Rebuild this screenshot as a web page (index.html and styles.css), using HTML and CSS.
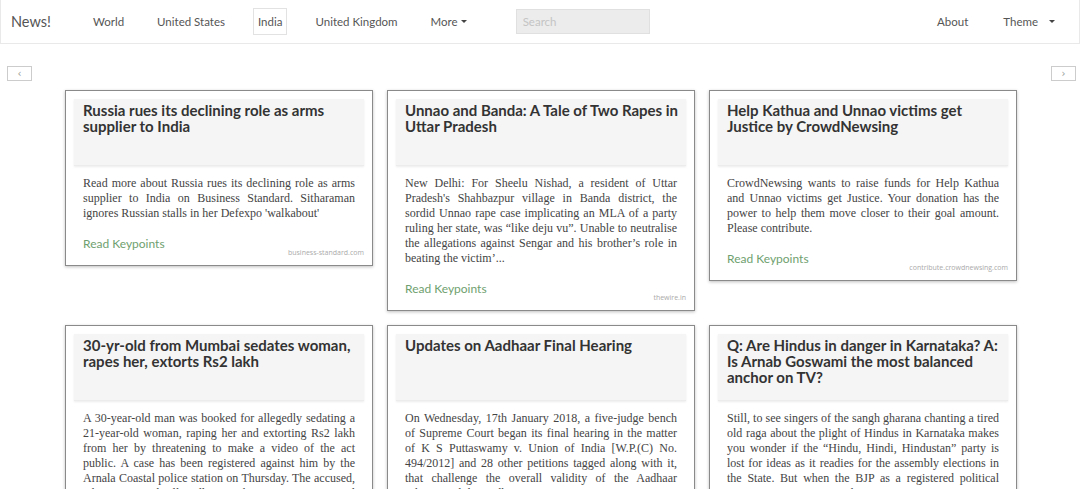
FILE: index.html
```html
<!DOCTYPE html>
<html lang="en">
<head>
<meta charset="utf-8">
<title>News!</title>
<link rel="stylesheet" href="styles.css">
</head>
<body>
<nav class="navbar">
  <a class="brand" href="#">News!</a>
  <ul class="nav-left">
    <li><a class="nav-link" href="#">World</a></li>
    <li><a class="nav-link" href="#">United States</a></li>
    <li><a class="nav-link active" href="#">India</a></li>
    <li><a class="nav-link" href="#">United Kingdom</a></li>
    <li><a class="nav-link dropdown" href="#">More<span class="caret"></span></a></li>
  </ul>
  <input class="search" type="text" placeholder="Search">
  <ul class="nav-right">
    <li><a class="nav-link" href="#">About</a></li>
    <li><a class="nav-link dropdown theme" href="#">Theme<span class="caret"></span></a></li>
  </ul>
</nav>

<div class="arrows">
  <button class="arrow">&#8249;</button>
  <button class="arrow">&#8250;</button>
</div>

<main class="cards">
  <article class="card">
    <header class="card-head"><h2>Russia rues its declining role as arms supplier to India</h2></header>
    <p class="card-text">Read more about Russia rues its declining role as arms supplier to India on Business Standard. Sitharaman ignores Russian stalls in her Defexpo 'walkabout'</p>
    <footer class="card-foot"><a class="keypoints" href="#">Read Keypoints</a><span class="source">business-standard.com</span></footer>
  </article>
  <article class="card">
    <header class="card-head"><h2>Unnao and Banda: A Tale of Two Rapes in Uttar Pradesh</h2></header>
    <p class="card-text">New Delhi: For Sheelu Nishad, a resident of Uttar Pradesh's Shahbazpur village in Banda district, the sordid Unnao rape case implicating an MLA of a party ruling her state, was “like deju vu”. Unable to neutralise the allegations against Sengar and his brother’s role in beating the victim’...</p>
    <footer class="card-foot"><a class="keypoints" href="#">Read Keypoints</a><span class="source">thewire.in</span></footer>
  </article>
  <article class="card">
    <header class="card-head"><h2>Help Kathua and Unnao victims get Justice by CrowdNewsing</h2></header>
    <p class="card-text">CrowdNewsing wants to raise funds for Help Kathua and Unnao victims get Justice. Your donation has the power to help them move closer to their goal amount. Please contribute.</p>
    <footer class="card-foot"><a class="keypoints" href="#">Read Keypoints</a><span class="source">contribute.crowdnewsing.com</span></footer>
  </article>
  <article class="card">
    <header class="card-head"><h2>30-yr-old from Mumbai sedates woman, rapes her, extorts Rs2 lakh</h2></header>
    <p class="card-text">A 30-year-old man was booked for allegedly sedating a 21-year-old woman, raping her and extorting Rs2 lakh from her by threatening to make a video of the act public. A case has been registered against him by the Arnala Coastal police station on Thursday. The accused, who is married, allegedly met the woman on a social networking site and befriended her.</p>
    <footer class="card-foot"><a class="keypoints" href="#">Read Keypoints</a><span class="source">dnaindia.com</span></footer>
  </article>
  <article class="card">
    <header class="card-head"><h2>Updates on Aadhaar Final Hearing</h2></header>
    <p class="card-text">On Wednesday, 17th January 2018, a five-judge bench of Supreme Court began its final hearing in the matter of K S Puttaswamy v. Union of India [W.P.(C) No. 494/2012] and 28 other petitions tagged along with it, that challenge the overall validity of the Aadhaar scheme and the Aadhaar Act, 2016.</p>
    <footer class="card-foot"><a class="keypoints" href="#">Read Keypoints</a><span class="source">sflc.in</span></footer>
  </article>
  <article class="card">
    <header class="card-head"><h2>Q: Are Hindus in danger in Karnataka? A: Is Arnab Goswami the most balanced anchor on TV?</h2></header>
    <p class="card-text">Still, to see singers of the sangh gharana chanting a tired old raga about the plight of Hindus in Karnataka makes you wonder if the “Hindu, Hindi, Hindustan” party is lost for ideas as it readies for the assembly elections in the State. But when the BJP as a registered political party presents its case to the voters...</p>
    <footer class="card-foot"><a class="keypoints" href="#">Read Keypoints</a><span class="source">thehindu.com</span></footer>
  </article>
</main>
</body>
</html>
```

FILE: styles.css
```css
* { box-sizing: border-box; }

html, body {
  margin: 0;
  padding: 0;
  background: #fff;
  font-family: Lato, "Open Sans", "Liberation Sans", sans-serif;
  color: #555;
}

a { text-decoration: none; }

.navbar {
  display: flex;
  align-items: center;
  height: 44px;
  border: 1px solid #e9e9e9;
  border-top: none;
  padding: 0 0 0 10px;
}

.brand {
  font-size: 14.5px;
  color: #555;
  margin-right: 37px;
}

.nav-left, .nav-right {
  list-style: none;
  display: flex;
  align-items: center;
  gap: 23px;
  margin: 0;
  padding: 0;
}

.nav-link {
  display: flex;
  align-items: center;
  height: 27px;
  padding: 0 4px;
  border: 1px solid transparent;
  font-size: 11.5px;
  color: #555;
}

.nav-link.active {
  border-color: #e2e2e2;
}

.caret {
  display: inline-block;
  width: 0;
  height: 0;
  margin-left: 3px;
  border-left: 3px solid transparent;
  border-right: 3px solid transparent;
  border-top: 3px solid #444;
}

.theme .caret { margin-left: 11px; }

.search {
  margin-left: 44px;
  width: 134px;
  height: 25px;
  background: #ececec;
  border: 1px solid #e0e0e0;
  padding: 0 6px;
  font-family: Lato, sans-serif;
  font-size: 11.5px;
  color: #555;
}

.search::placeholder { color: #c4c4c4; }

.nav-right {
  margin-left: auto;
  margin-right: 19px;
  gap: 25px;
}

.arrows {
  display: flex;
  justify-content: space-between;
  padding: 0 4px 0 7px;
  margin-top: 22px;
}

.arrow {
  width: 25px;
  height: 15px;
  padding: 0;
  border: 1px solid #ccc;
  background: #fff;
  color: #999;
  font-size: 10px;
  line-height: 11px;
  font-family: "DejaVu Sans", sans-serif;
}

.cards {
  width: 953px;
  margin: 9px 0 0 65px;
  display: flex;
  flex-wrap: wrap;
  align-items: flex-start;
  column-gap: 14px;
  row-gap: 14px;
}

.card {
  width: 308px;
  border: 1px solid #8a8a8a;
  box-shadow: 0 1px 3px rgba(0,0,0,0.25);
  padding: 8px;
  background: #fff;
}

.card-head {
  background: #f5f5f5;
  min-height: 67px;
  padding: 3px 5px 8px 9px;
  box-shadow: 0 1px 2px rgba(0,0,0,0.08);
  border-bottom: 1px solid #ececec;
}

.card-head h2 {
  margin: 0;
  font-size: 15px;
  line-height: 16px;
  font-weight: 700;
  color: #333;
}

.card-text {
  margin: 10px 0 0;
  padding: 0 9px;
  font-family: "Liberation Serif", serif;
  font-size: 12px;
  line-height: 15px;
  color: #444;
  text-align: justify;
}

.card-foot {
  display: flex;
  justify-content: space-between;
  align-items: flex-end;
  margin-top: 15px;
  padding-left: 9px;
}

.keypoints {
  font-size: 12px;
  line-height: 15px;
  color: #6f9f6f;
  margin-bottom: 6px;
}

.source {
  font-family: "Open Sans", sans-serif;
  font-size: 7px;
  line-height: 8px;
  color: #aaa;
}
```
